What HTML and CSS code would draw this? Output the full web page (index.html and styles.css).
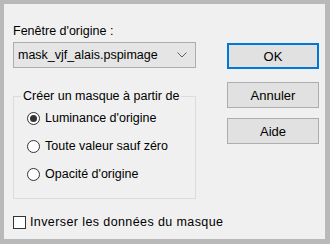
FILE: index.html
```html
<!DOCTYPE html>
<html lang="fr">
<head>
  <meta charset="UTF-8" />
  <title>Masque à partir d'une image</title>
  <link rel="stylesheet" href="styles.css">
</head>
<body>
  <div class="dialog">
    <div class="main">
      <div class="field-label">Fenêtre d'origine :</div>
      <div class="combo">
        <span>mask_vjf_alais.pspimage</span>
        <svg class="chevron" width="10" height="6" viewBox="0 0 10 6">
          <path d="M0.5 0.5 L5 5 L9.5 0.5" fill="none" stroke="#606060" stroke-width="1"/>
        </svg>
      </div>

      <fieldset class="group">
        <legend>Créer un masque à partir de</legend>
        <label class="radio"><span class="dot checked"></span>Luminance d'origine</label>
        <label class="radio"><span class="dot"></span>Toute valeur sauf zéro</label>
        <label class="radio"><span class="dot"></span>Opacité d'origine</label>
      </fieldset>

      <label class="check"><span class="box"></span>Inverser les données du masque</label>
    </div>

    <div class="buttons">
      <button class="btn default">OK</button>
      <button class="btn">Annuler</button>
      <button class="btn">Aide</button>
    </div>
  </div>
</body>
</html>
```

FILE: styles.css
```css
body {
  margin: 0;
  background: #b9b9b9;
  font-family: "Liberation Sans", Arial, sans-serif;
  font-size: 12.5px;
  color: #000;
}

.dialog {
  margin: 4px 5px 5px 4px;
  height: 235px;
  background: #f0f0f0;
  box-sizing: border-box;
  display: flex;
  padding: 0 0 0 9px;
  white-space: nowrap;
}

.main {
  width: 183px;
  flex: none;
}

.field-label {
  margin-top: 20px;
  height: 14px;
  line-height: 14px;
}

.combo {
  margin-top: 4px;
  height: 26px;
  box-sizing: border-box;
  border: 1px solid #adadad;
  background: #e5e5e5;
  display: flex;
  align-items: center;
  justify-content: space-between;
  padding: 0 8px 0 4px;
}

.group {
  margin: 21px 0 0 0;
  padding: 1px 0 10px 13px;
  border: 1px solid #dcdcdc;
  border-radius: 0;
  min-width: 0;
}

.group legend {
  padding: 0 2px;
  margin-left: -6px;
  line-height: 14px;
  height: 14px;
}

.radio {
  display: flex;
  align-items: center;
  height: 28px;
}

.dot {
  flex: none;
  width: 13px;
  height: 13px;
  box-sizing: border-box;
  border: 1px solid #333;
  border-radius: 50%;
  background: #fff;
  margin-right: 5px;
  position: relative;
}

.dot.checked::after {
  content: "";
  position: absolute;
  left: 2px;
  top: 2px;
  width: 7px;
  height: 7px;
  border-radius: 50%;
  background: #333;
}

.check {
  display: flex;
  align-items: center;
  margin-top: 16px;
  height: 14px;
  letter-spacing: 0.4px;
}

.box {
  flex: none;
  width: 13px;
  height: 13px;
  box-sizing: border-box;
  border: 1px solid #333;
  background: #fff;
  margin-right: 4px;
}

.buttons {
  margin-left: 31px;
  padding-top: 38px;
  display: flex;
  flex-direction: column;
}

.btn {
  width: 92px;
  height: 26px;
  box-sizing: border-box;
  border: 1px solid #adadad;
  background: #e1e1e1;
  font-family: inherit;
  font-size: 13px;
  color: #000;
  padding: 0;
  margin-bottom: 10px;
}

.btn.default {
  border: 2px solid #0078d7;
  margin-top: 1px;
  margin-bottom: 13px;
}
```
